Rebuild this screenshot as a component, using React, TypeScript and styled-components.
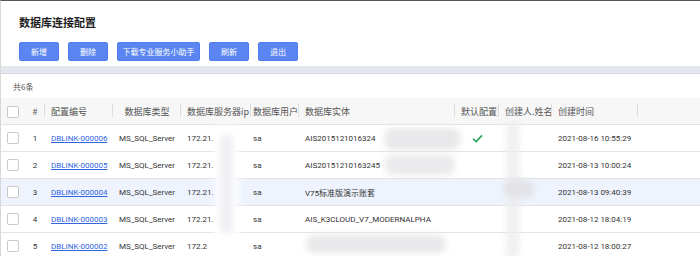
import React from "react";
import styled, { createGlobalStyle } from "styled-components";

const Global = createGlobalStyle`
  html, body { margin: 0; padding: 0; background: #fff; }
  body { font-family: "Noto Sans CJK SC", "Noto Sans", Roboto, sans-serif; width: 700px; height: 256px; overflow: hidden; }
`;

const Page = styled.div`
  border-top: 1px solid #555;
  border-left: 1px solid #d8d8d8;
  height: 256px;
  overflow: hidden;
  box-sizing: border-box;
`;

const Head = styled.div`
  padding: 11px 0 0 18px;
`;

const Title = styled.h1`
  margin: 0;
  font-size: 11px;
  line-height: 20px;
  font-weight: 700;
  color: #1f1f1f;
`;

const Toolbar = styled.div`
  display: flex;
  gap: 9px;
  margin-top: 10px;
`;

const Btn = styled.button<{ w: number }>`
  width: ${(p) => p.w}px;
  height: 19px;
  padding: 0;
  border: 1px solid #4f7cf0;
  border-radius: 2px;
  background: #5b86f2;
  color: #fff;
  font-family: inherit;
  font-size: 8px;
  line-height: 17px;
  box-sizing: border-box;
`;

const Band = styled.div`
  margin-top: 5px;
  height: 7px;
  background: #e3e7ee;
  border-bottom: 1px solid #d2d6dd;
`;

const Count = styled.div`
  padding-left: 12px;
  height: 24px;
  line-height: 26px;
  font-size: 8px;
  color: #555;
`;

const TableWrap = styled.div`
  position: relative;
`;

const Table = styled.table`
  width: 700px;
  border-collapse: collapse;
  table-layout: fixed;
  font-size: 8px;
  color: #333;
`;

const Th = styled.th<{ center?: boolean; pad?: number }>`
  height: 26px;
  padding: 0 0 0 ${(p) => p.pad ?? 6}px;
  background: #f7f7f7;
  font-weight: 400;
  font-size: 9px;
  color: #555;
  text-align: ${(p) => (p.center ? "center" : "left")};
  white-space: nowrap;
  overflow: hidden;
  position: relative;
  border-bottom: 1px solid #e4e4e4;
  &::after {
    content: "";
    position: absolute;
    right: 0;
    top: 6px;
    height: 13px;
    width: 1px;
    background: #dcdcdc;
  }
  &.noline::after { display: none; }
`;

const Tr = styled.tr<{ hover?: boolean }>`
  background: ${(p) => (p.hover ? "#eef3fd" : "#fff")};
`;

const Td = styled.td<{ center?: boolean; pad?: number }>`
  height: 26px;
  padding: 0 0 0 ${(p) => p.pad ?? 6}px;
  border-bottom: 1px solid #e4e4e4;
  text-align: ${(p) => (p.center ? "center" : "left")};
  white-space: nowrap;
  overflow: hidden;
  font-family: Roboto, "Noto Sans CJK SC", sans-serif;
`;

const Check = styled.span`
  display: inline-block;
  width: 10px;
  height: 10px;
  border: 1px solid #c9c9c9;
  border-radius: 2px;
  background: #fff;
  vertical-align: middle;
`;

const Link = styled.a`
  color: #2f66e0;
  text-decoration: underline;
`;

const Tick = styled.svg`
  vertical-align: middle;
`;

const Blob = styled.div`
  position: absolute;
  filter: blur(3px);
  border-radius: 8px;
  pointer-events: none;
`;

const rows = [
  { n: 1, id: "DBLINK-000006", ip: "172.21.", ent: "AIS2015121016324", def: true, t: "2021-08-16 10:55:29" },
  { n: 2, id: "DBLINK-000005", ip: "172.21.", ent: "AIS20151210163245", def: false, t: "2021-08-13 10:00:24" },
  { n: 3, id: "DBLINK-000004", ip: "172.21.", ent: "V75标准版演示账套", def: false, t: "2021-08-13 09:40:39", hover: true },
  { n: 4, id: "DBLINK-000003", ip: "172.21.", ent: "AIS_K3CLOUD_V7_MODERNALPHA", def: false, t: "2021-08-12 18:04:19" },
  { n: 5, id: "DBLINK-000002", ip: "172.2", ent: "", def: false, t: "2021-08-12 18:00:27" },
];

const blobs = [
  { l: 214, t: 28, w: 24, h: 140, c: "rgba(255,255,255,0.95)" },
  { l: 219, t: 36, w: 13, h: 100, c: "rgba(236,236,240,0.8)" },
  { l: 384, t: 30, w: 75, h: 22, c: "rgba(230,230,232,0.9)" },
  { l: 384, t: 57, w: 70, h: 20, c: "rgba(232,232,234,0.9)" },
  { l: 305, t: 137, w: 140, h: 18, c: "rgba(228,228,230,0.85)" },
  { l: 505, t: 22, w: 14, h: 140, c: "rgba(238,238,240,0.8)" },
  { l: 503, t: 82, w: 30, h: 18, c: "rgba(224,224,228,0.85)" },
];

export default function App() {
  return (
    <Page>
      <Global />
      <Head>
        <Title>数据库连接配置</Title>
        <Toolbar>
          <Btn w={40}>新增</Btn>
          <Btn w={40}>删除</Btn>
          <Btn w={83}>下载专业服务小助手</Btn>
          <Btn w={40}>刷新</Btn>
          <Btn w={40}>退出</Btn>
        </Toolbar>
      </Head>
      <Band />
      <Count>共6条</Count>
      <TableWrap>
        <Table>
          <colgroup>
            <col style={{ width: 24 }} />
            <col style={{ width: 20 }} />
            <col style={{ width: 68 }} />
            <col style={{ width: 68 }} />
            <col style={{ width: 70 }} />
            <col style={{ width: 48 }} />
            <col style={{ width: 156 }} />
            <col style={{ width: 44 }} />
            <col style={{ width: 53 }} />
            <col style={{ width: 86 }} />
            <col />
          </colgroup>
          <thead>
            <tr>
              <Th pad={6} className="noline"><Check /></Th>
              <Th center pad={0}>#</Th>
              <Th>配置编号</Th>
              <Th center pad={0}>数据库类型</Th>
              <Th>数据库服务器ip</Th>
              <Th pad={2}>数据库用户</Th>
              <Th>数据库实体</Th>
              <Th>默认配置</Th>
              <Th>创建人.姓名</Th>
              <Th>创建时间</Th>
              <Th className="noline" />
            </tr>
          </thead>
          <tbody>
            {rows.map((r) => (
              <Tr key={r.n} hover={r.hover}>
                <Td pad={6}><Check /></Td>
                <Td center pad={0}>{r.n}</Td>
                <Td><Link>{r.id}</Link></Td>
                <Td>MS_SQL_Server</Td>
                <Td>{r.ip}</Td>
                <Td pad={2}>sa</Td>
                <Td>{r.ent}</Td>
                <Td center pad={0}>
                  {r.def && (
                    <Tick width="11" height="9" viewBox="0 0 12 10">
                      <path d="M1 5.5 L4.5 8.5 L11 1.5" fill="none" stroke="#2aa55a" strokeWidth="1.8" />
                    </Tick>
                  )}
                </Td>
                <Td />
                <Td>{r.t}</Td>
                <Td />
              </Tr>
            ))}
          </tbody>
        </Table>
        {blobs.map((b, i) => (
          <Blob key={i} style={{ left: b.l, top: b.t, width: b.w, height: b.h, background: b.c }} />
        ))}
      </TableWrap>
    </Page>
  );
}
